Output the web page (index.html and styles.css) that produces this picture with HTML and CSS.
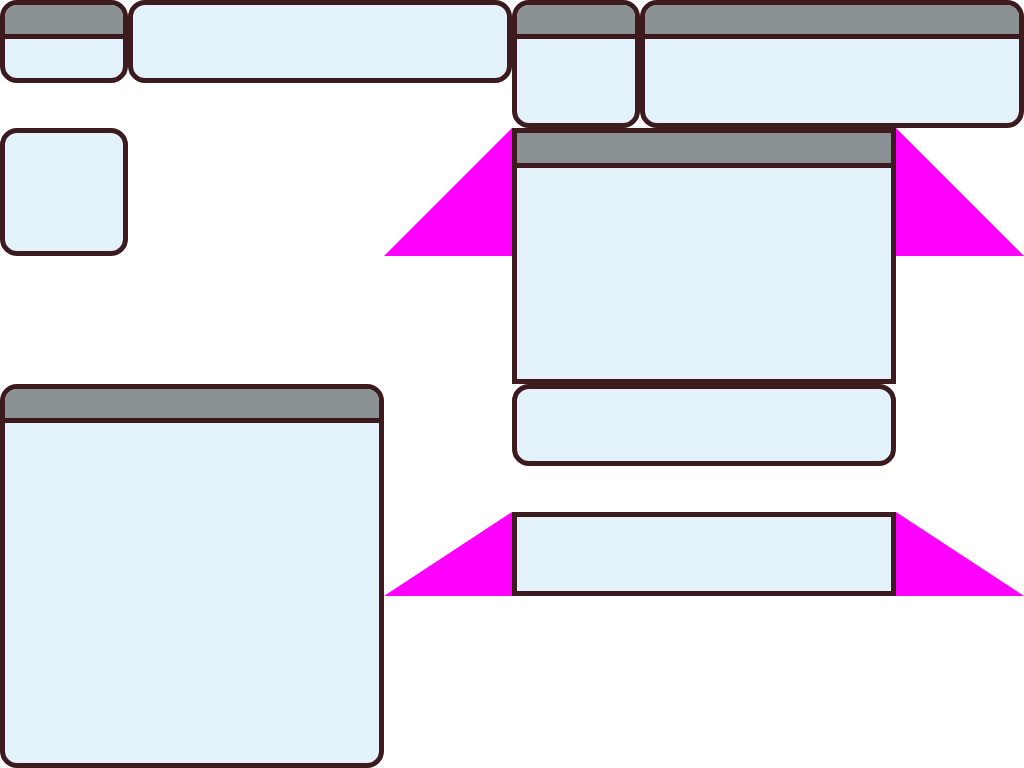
FILE: index.html
```html
<!DOCTYPE html>
<html lang="en">
<head>
  <meta charset="UTF-8" />
  <meta name="viewport" content="width=device-width, initial-scale=1" />
  <title>Layout Diagram</title>
  <link rel="stylesheet" href="styles.css">
</head>
<body>
  <div class="canvas">
    <div class="box round short top-a"><div class="head"></div></div>
    <div class="box round short top-b"></div>
    <div class="box round top-c"><div class="head"></div></div>
    <div class="box round top-d"><div class="head"></div></div>

    <div class="box round side-square"></div>

    <div class="wing wing-left up"></div>
    <div class="box main-panel"><div class="head"></div></div>
    <div class="wing wing-right up"></div>

    <div class="box round short under-panel"></div>

    <div class="box round big-panel"><div class="head"></div></div>

    <div class="wing wing-left low"></div>
    <div class="box low-panel"></div>
    <div class="wing wing-right low"></div>
  </div>
</body>
</html>
```

FILE: styles.css
```css
body {
  margin: 0;
  padding: 0;
  background: #fff;
}

.canvas {
  display: grid;
  grid-template-columns: repeat(8, 128px);
  grid-template-rows: repeat(6, 128px);
  width: 1024px;
  height: 768px;
  overflow: hidden;
}

.box {
  box-sizing: border-box;
  background: #e3f1f9;
  border: 5px solid #3c1a1d;
  overflow: hidden;
}

.round {
  border-radius: 17px;
}

.short {
  align-self: start;
  height: 83px;
}

.head {
  height: 29px;
  background: #8a9192;
  border-bottom: 5px solid #3c1a1d;
}

.top-a { grid-column: 1; grid-row: 1; }
.top-b { grid-column: 2 / 5; grid-row: 1; }
.top-c { grid-column: 5; grid-row: 1; }
.top-d { grid-column: 6 / 9; grid-row: 1; }

.side-square { grid-column: 1; grid-row: 2; }

.main-panel {
  grid-column: 5 / 8;
  grid-row: 2 / 4;
}
.main-panel .head { height: 30px; }

.under-panel { grid-column: 5 / 8; grid-row: 4; height: 82px; }

.big-panel {
  grid-column: 1 / 4;
  grid-row: 4 / 7;
}

.low-panel {
  grid-column: 5 / 8;
  grid-row: 5;
  align-self: start;
  height: 84px;
}

.wing {
  background: #ff00ff;
  align-self: start;
}

.wing.up { grid-row: 2; height: 128px; }
.wing.low { grid-row: 5; height: 84px; }

.wing-left { grid-column: 4; clip-path: polygon(100% 0, 100% 100%, 0 100%); }
.wing-right { grid-column: 8; clip-path: polygon(0 0, 100% 100%, 0 100%); }
```
